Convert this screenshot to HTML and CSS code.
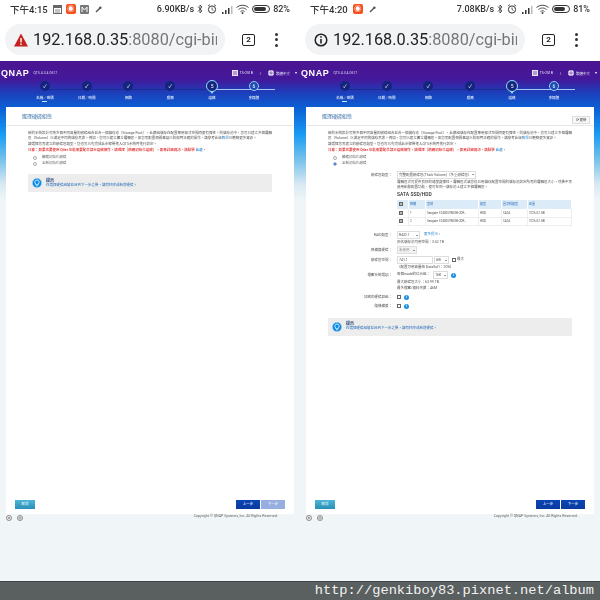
FILE: index.html
```html
<!DOCTYPE html>
<html lang="zh-Hant">
<head>
<meta charset="utf-8">
<title>QTS</title>
<link rel="stylesheet" href="styles.css">
</head>
<body>
<main class="screens">

<section class="phone">
  <div class="status">
    <span class="time">下午4:15</span>
    <svg class="ic-cal" viewBox="0 0 9 9"><rect x=".5" y=".5" width="8" height="8" fill="#fff" stroke="#666"/><rect x="1" y="1" width="7" height="2" fill="#666"/><path d="M2 5h5M2 7h5" stroke="#888"/></svg>
    <span class="app-badge">◉</span>
    <svg class="ic-cal" viewBox="0 0 9 9"><rect width="9" height="9" rx="1" fill="#777"/><path d="M2 7V2l2.500 3L7 2v5" fill="none" stroke="#fff"/></svg>
    <svg class="ic-wrench" viewBox="0 0 7 7"><path d="M1 6l4-4" stroke="#555" stroke-width="1.400"/><circle cx="5.300" cy="1.700" r="1.300" fill="#555"/></svg>
    <span class="status-right">
      <span class="speed">6.90KB/s</span>
      <svg class="ic-bt" viewBox="0 0 6 10"><path d="M1 2.500l4 4.500-2 2V1l2 2-4 4.500" fill="none" stroke="#333" stroke-width=".8"/></svg>
      <svg class="ic-alarm" viewBox="0 0 10 10"><circle cx="5" cy="5.500" r="3.600" fill="none" stroke="#333"/><path d="M5 3.500v2l1.500 1M1 2l2-1.500M9 2L7 .5" fill="none" stroke="#333" stroke-width=".8"/></svg>
      <svg class="ic-sig" viewBox="0 0 12 9"><path d="M1 7h1.500v2H1zM4 5h1.500v4H4zM7 3h1.500v6H7z" fill="#333"/><path d="M10 1h1.500v8H10z" fill="#bbb"/></svg>
      <svg class="ic-wifi" viewBox="0 0 13 10"><path d="M.5 3.500C4 .5 9 .5 12.500 3.500M2.500 5.500C5 3.500 8 3.500 10.500 5.500M4.500 7.500C5.700 6.600 7.300 6.600 8.500 7.500" fill="none" stroke="#444"/><circle cx="6.500" cy="9" r="1" fill="#444"/></svg>
      <span class="battery"><span class="battery-fill b82"></span></span>
      <span class="pct">82%</span>
    </span>
  </div>
  <div class="toolbar">
    <div class="urlbar">
      <svg class="ic-warn" viewBox="0 0 14 13"><path d="M7 0l7 13H0z" fill="#c5221f"/><path d="M6.300 4.500h1.400v4.500H6.300zM6.300 10h1.400v1.400H6.300z" fill="#fff"/></svg>
      <span class="url"><b>192.168.0.35</b>:8080/cgi-bin</span>
    </div>
    <span class="tabs">2</span>
    <span class="more"><i></i><i></i><i></i></span>
  </div>
  <div class="qts">
    <header class="qts-top">
      <span class="logo">QNAP</span><span class="ver">QTS 4.3.4.0617</span>
      <span class="qts-right">
        <svg class="ic-nas" viewBox="0 0 6 6"><rect width="6" height="6" fill="#e8e4f5"/><path d="M1 2h4M1 4h4" stroke="#4b1590" stroke-width=".7"/></svg><span class="chip">TS-251B</span><span class="sep">|</span>
        <svg class="ic-globe" viewBox="0 0 6 6"><circle cx="3" cy="3" r="3" fill="#e8e4f5"/><path d="M3 0v6M0 3h6" stroke="#4b1590" stroke-width=".5"/></svg><span class="chip">繁體中文</span><span class="caret">▾</span>
      </span>
    </header>
    <ol class="steps">
      <li class="step done"><span class="dot">✓</span><span class="lbl">名稱／密碼</span><span class="mark"></span></li>
      <li class="step done"><span class="dot">✓</span><span class="lbl">日期／時間</span></li>
      <li class="step done"><span class="dot">✓</span><span class="lbl">網路</span></li>
      <li class="step done"><span class="dot">✓</span><span class="lbl">服務</span></li>
      <li class="step now"><span class="dot">5</span><span class="lbl">磁碟</span></li>
      <li class="step todo"><span class="dot">6</span><span class="lbl">多媒體</span></li>
    </ol>
    <div class="card">
      <div class="card-head"><h1>選擇硬碟組態</h1></div>
      <div class="card-body">
        <p>新的系統設計可將多個不同容量的磁碟組合並合一個儲存池（Storage Pool），此數組儲存在配置專用部式空間時更有彈性。則儲存池中，您可以建立多個邏輯區（Volume）以滿足不同的儲存需求。例如，您可以建立獨立邏輯區。如您需配置相關事項以防部門正確的操作，請參考此版<a>教學</a>以瞭解更多資訊。</p>
        <p>請選擇您需建立的磁碟區類型。您也可以先完成此步驟後進入QTS系統再進行設定。</p>
        <p class="warn">注意：如果您要使用 Qtier 功能需要配合部分磁碟操作，請選擇［精確初始化磁碟］，如需詳細資訊，請點擊 <a>此處</a>。</p>
        <label class="radio"><i></i><span>精確初始化磁碟</span></label>
        <label class="radio"><i></i><span>全新初始化磁碟</span></label>
        <div class="tip">
          <svg class="tip-ic" viewBox="0 0 10 10"><circle cx="5" cy="5" r="4.700" fill="#0d8ae6" stroke="#bfe3fb" stroke-width=".5"/><path d="M5 2a2.200 2.200 0 0 0-1.200 4v.8h2.400V6A2.200 2.200 0 0 0 5 2z" fill="none" stroke="#fff" stroke-width=".8"/><path d="M4 7.800h2" stroke="#fff" stroke-width=".7"/></svg>
          <div><strong>提示</strong><span>在選擇硬碟組態並且到下一步之後，請勿移除或新增硬碟。</span></div>
        </div>
      </div>
      <div class="card-foot">
        <button class="btn cancel">取消</button>
        <span class="nav"><button class="btn prev">上一步</button><button class="btn next off">下一步</button></span>
      </div>
    </div>
    <footer class="foot">
      <svg class="foot-ic" viewBox="0 0 7 7"><circle cx="3.500" cy="3.500" r="3" fill="#e8e8e8" stroke="#888"/><path d="M2 2l3 3M5 2L2 5" stroke="#777" stroke-width=".7"/></svg>
      <svg class="foot-ic" viewBox="0 0 7 7"><circle cx="3.500" cy="3.500" r="3" fill="#e8e8e8" stroke="#888"/><circle cx="3.500" cy="3.500" r="1.300" fill="none" stroke="#777" stroke-width=".7"/></svg>
      <span class="copy">Copyright © QNAP Systems, Inc. All Rights Reserved.</span>
    </footer>
  </div>
</section>

<section class="phone">
  <div class="status">
    <span class="time">下午4:20</span>
    <span class="app-badge">◉</span>
    <svg class="ic-wrench" viewBox="0 0 7 7"><path d="M1 6l4-4" stroke="#555" stroke-width="1.400"/><circle cx="5.300" cy="1.700" r="1.300" fill="#555"/></svg>
    <span class="status-right">
      <span class="speed">7.08KB/s</span>
      <svg class="ic-bt" viewBox="0 0 6 10"><path d="M1 2.500l4 4.500-2 2V1l2 2-4 4.500" fill="none" stroke="#333" stroke-width=".8"/></svg>
      <svg class="ic-alarm" viewBox="0 0 10 10"><circle cx="5" cy="5.500" r="3.600" fill="none" stroke="#333"/><path d="M5 3.500v2l1.500 1M1 2l2-1.500M9 2L7 .5" fill="none" stroke="#333" stroke-width=".8"/></svg>
      <svg class="ic-sig" viewBox="0 0 12 9"><path d="M1 7h1.500v2H1zM4 5h1.500v4H4zM7 3h1.500v6H7z" fill="#333"/><path d="M10 1h1.500v8H10z" fill="#bbb"/></svg>
      <svg class="ic-wifi" viewBox="0 0 13 10"><path d="M.5 3.500C4 .5 9 .5 12.500 3.500M2.500 5.500C5 3.500 8 3.500 10.500 5.500M4.500 7.500C5.700 6.600 7.300 6.600 8.500 7.500" fill="none" stroke="#444"/><circle cx="6.500" cy="9" r="1" fill="#444"/></svg>
      <span class="battery"><span class="battery-fill b81"></span></span>
      <span class="pct">81%</span>
    </span>
  </div>
  <div class="toolbar">
    <div class="urlbar">
      <svg class="ic-warn" viewBox="0 0 14 14"><circle cx="7" cy="7" r="5.800" fill="none" stroke="#222" stroke-width="1.500"/><path d="M6.200 6h1.600v4.500H6.200zM6.200 3.300h1.600v1.500H6.200z" fill="#222"/></svg>
      <span class="url"><b>192.168.0.35</b>:8080/cgi-bin</span>
    </div>
    <span class="tabs">2</span>
    <span class="more"><i></i><i></i><i></i></span>
  </div>
  <div class="qts">
    <header class="qts-top">
      <span class="logo">QNAP</span><span class="ver">QTS 4.3.4.0617</span>
      <span class="qts-right">
        <svg class="ic-nas" viewBox="0 0 6 6"><rect width="6" height="6" fill="#e8e4f5"/><path d="M1 2h4M1 4h4" stroke="#4b1590" stroke-width=".7"/></svg><span class="chip">TS-251B</span><span class="sep">|</span>
        <svg class="ic-globe" viewBox="0 0 6 6"><circle cx="3" cy="3" r="3" fill="#e8e4f5"/><path d="M3 0v6M0 3h6" stroke="#4b1590" stroke-width=".5"/></svg><span class="chip">繁體中文</span><span class="caret">▾</span>
      </span>
    </header>
    <ol class="steps">
      <li class="step done"><span class="dot">✓</span><span class="lbl">名稱／密碼</span><span class="mark"></span></li>
      <li class="step done"><span class="dot">✓</span><span class="lbl">日期／時間</span></li>
      <li class="step done"><span class="dot">✓</span><span class="lbl">網路</span></li>
      <li class="step done"><span class="dot">✓</span><span class="lbl">服務</span></li>
      <li class="step now"><span class="dot">5</span><span class="lbl">磁碟</span></li>
      <li class="step todo"><span class="dot">6</span><span class="lbl">多媒體</span></li>
    </ol>
    <div class="card">
      <div class="card-head"><h1>選擇硬碟組態</h1><span class="refresh">⟳ 更新</span></div>
      <div class="card-body">
        <p>新的系統設計可將多個不同容量的磁碟組合並合一個儲存池（Storage Pool），此數組儲存在配置專用部式空間時更有彈性。則儲存池中，您可以建立多個邏輯區（Volume）以滿足不同的儲存需求。例如，您可以建立獨立邏輯區。如您需配置相關事項以防部門正確的操作，請參考此版<a>教學</a>以瞭解更多資訊。</p>
        <p>請選擇您需建立的磁碟區類型。您也可以先完成此步驟後進入QTS系統再進行設定。</p>
        <p class="warn">注意：如果您要使用 Qtier 功能需要配合部分磁碟操作，請選擇［精確初始化磁碟］，如需詳細資訊，請點擊 <a>此處</a>。</p>
        <label class="radio"><i></i><span>精確初始化磁碟</span></label>
        <label class="radio on"><i></i><span>全新初始化磁碟</span></label>
        <div class="form">
          <div class="row"><span class="k">磁碟區類型：</span><div class="v"><span class="select wide">完整配置磁碟區(Thick Volume)（多重磁碟區）</span>
            <p class="hint">邏輯區式可提供良好的速度與彈性。邏輯區式讓您從已用儲存配置空間的儲存池設定所需的邏輯區大小，然後不需使用動態配置功能，便可在同一儲存池上建立多個邏輯區。</p></div></div>
          <div class="row"><span class="k"></span><div class="v disks">
            <h2>SATA SSD/HDD</h2>
            <table class="dt">
              <thead><tr><th class="c0"><i class="cb on"></i></th><th class="c1">籤槽</th><th class="c2">型號</th><th class="c3">類型</th><th class="c4">匯流排類型</th><th class="c5">容量</th></tr></thead>
              <tbody>
                <tr><td><i class="cb on"></i></td><td>1</td><td>Seagate ST4000VN008-2DR...</td><td>HDD</td><td>SATA</td><td>3726.02 GB</td></tr>
                <tr><td><i class="cb on"></i></td><td>2</td><td>Seagate ST4000VN008-2DR...</td><td>HDD</td><td>SATA</td><td>3726.02 GB</td></tr>
              </tbody>
            </table>
          </div></div>
          <div class="row"><span class="k">RAID類型：</span><div class="v"><div class="line"><span class="select s1">RAID 1</span><a class="more-link">更多提示 »</a></div><p class="hint">預估儲存池可用空間：3.62 TB</p></div></div>
          <div class="row gap2"><span class="k">熱備援硬碟：</span><div class="v"><div class="line"><span class="select s2 dim">未使用</span></div></div></div>
          <div class="row"><span class="k">磁碟區空間：</span><div class="v"><div class="line"><span class="input">741.1</span><span class="select s3">GB</span><i class="cb"></i><span>最大</span></div><p class="hint">（配置可用容量給 DataVol1：20%）</p></div></div>
          <div class="row gap3"><span class="k">檔案系統選項：</span><div class="v"><div class="line"><span>每個inode的位元組：</span><span class="select s4">16K</span><i class="info">i</i></div><p class="hint">最大磁碟區大小：63.99 TB<br>最多檔案/資料夾數：46M</p></div></div>
          <div class="row gap4"><span class="k">加密的硬碟群組：</span><div class="v"><div class="line short"><i class="cb"></i><i class="info">i</i></div></div></div>
          <div class="row"><span class="k">隨機備援：</span><div class="v"><div class="line short"><i class="cb"></i><i class="info">i</i></div></div></div>
        </div>
        <div class="tip">
          <svg class="tip-ic" viewBox="0 0 10 10"><circle cx="5" cy="5" r="4.700" fill="#0d8ae6" stroke="#bfe3fb" stroke-width=".5"/><path d="M5 2a2.200 2.200 0 0 0-1.200 4v.8h2.400V6A2.200 2.200 0 0 0 5 2z" fill="none" stroke="#fff" stroke-width=".8"/><path d="M4 7.800h2" stroke="#fff" stroke-width=".7"/></svg>
          <div><strong>提示</strong><span>在選擇硬碟組態並且到下一步之後，請勿移除或新增硬碟。</span></div>
        </div>
      </div>
      <div class="card-foot">
        <button class="btn cancel">取消</button>
        <span class="nav"><button class="btn prev">上一步</button><button class="btn next">下一步</button></span>
      </div>
    </div>
    <footer class="foot">
      <svg class="foot-ic" viewBox="0 0 7 7"><circle cx="3.500" cy="3.500" r="3" fill="#e8e8e8" stroke="#888"/><path d="M2 2l3 3M5 2L2 5" stroke="#777" stroke-width=".7"/></svg>
      <svg class="foot-ic" viewBox="0 0 7 7"><circle cx="3.500" cy="3.500" r="3" fill="#e8e8e8" stroke="#888"/><circle cx="3.500" cy="3.500" r="1.300" fill="none" stroke="#777" stroke-width=".7"/></svg>
      <span class="copy">Copyright © QNAP Systems, Inc. All Rights Reserved.</span>
    </footer>
  </div>
</section>

</main>
<div class="watermark">http://genkiboy83.pixnet.net/album</div>
</body>
</html>
```

FILE: styles.css
```css
* { box-sizing: border-box; }
html, body { margin: 0; height: 600px; overflow: hidden; }
body { font-family: "Roboto", "Noto Sans CJK TC", sans-serif; background: #f0f5f8; color: #333; display: flex; flex-direction: column; }
.screens { display: grid; grid-template-columns: 300px 300px; height: 581px; filter: blur(.3px); }
.phone { display: flex; flex-direction: column; min-width: 0; background: #fff; }

.status { height: 18px; padding: 0 10px; display: flex; align-items: center; gap: 4px; font-size: 9.500px; font-weight: 500; color: #333; }
.time { margin-right: 1px; }
.ic-cal { width: 9px; height: 9px; }
.app-badge { width: 10px; height: 10px; border-radius: 2px; background: #f4511e; color: #fff; font-size: 7px; line-height: 10px; text-align: center; }
.ic-wrench { width: 7px; height: 7px; margin-left: 2px; }
.status-right { margin-left: auto; display: flex; align-items: center; gap: 3px; }
.speed { font-size: 9px; }
.pct { font-size: 9px; }
.ic-bt { width: 6px; height: 10px; }
.ic-alarm { width: 10px; height: 10px; margin: 0 1px; }
.ic-sig { width: 12px; height: 9px; }
.ic-wifi { width: 13px; height: 10px; }
.battery { width: 18px; height: 8px; border: 1px solid #333; border-radius: 4px; padding: 1px; display: block; }
.battery-fill { display: block; height: 100%; background: #333; border-radius: 2px; }
.b82 { width: 82%; }
.b81 { width: 81%; }

.toolbar { height: 43px; padding: 6px 0 6px 5px; display: flex; align-items: center; }
.urlbar { width: 220px; height: 31px; background: #f1f3f4; border-radius: 16px; display: flex; align-items: center; padding-left: 9px; gap: 5px; overflow: hidden; }
.ic-warn { width: 14px; height: 14px; flex: none; }
.url { font-size: 16.300px; color: #777; white-space: nowrap; overflow: hidden; width: 184px; }
.url b { font-weight: 400; color: #222; }
.tabs { margin-left: 17px; width: 13px; height: 12px; border: 1.500px solid #222; border-radius: 2px; font-size: 8px; font-weight: 700; line-height: 9px; text-align: center; color: #222; }
.more { margin-left: 20px; display: flex; flex-direction: column; gap: 2.500px; }
.more i { width: 3px; height: 3px; border-radius: 50%; background: #333; display: block; }

.qts { flex: 1; min-height: 0; display: flex; flex-direction: column; background: linear-gradient(180deg, #4b1590 0, #44189a 18px, #1c3fbb 32px, #0a62d6 48px, #1a9cf5 74px, #7cc4ea 100px, #dbeaf3 124px, #f0f5f8 140px); }
.qts-top { height: 16px; margin-top: 4px; padding: 0 3px 0 1px; display: flex; align-items: center; color: #fff; }
.logo { font-size: 9px; font-weight: 700; letter-spacing: .6px; font-family: "Liberation Sans", sans-serif; }
.ver { font-size: 3.500px; margin-left: 4px; color: #dcd6f0; }
.qts-right { margin-left: auto; display: flex; align-items: center; gap: 2px; font-size: 3.500px; }
.ic-nas, .ic-globe { width: 6px; height: 6px; }
.chip { color: #e8e4f5; }
.sep { font-size: 4px; color: #ddd; margin: 0 5px; }
.caret { font-size: 3.500px; margin-left: 3px; }

.steps { list-style: none; margin: 0; padding: 0 26px 0 24px; height: 26px; display: grid; grid-template-columns: repeat(6, 41.800px); }
.step { position: relative; display: flex; flex-direction: column; align-items: center; padding-top: 2px; }
.step::after { content: ""; position: absolute; left: 50%; top: 7.500px; width: 42px; height: 1px; background: #17308f; }
.step.now::after, .step.todo::after { background: #9fc8f0; }
.step.todo::after { width: 21px; }
.dot { position: relative; z-index: 1; width: 10px; height: 10px; margin-top: -2px; border-radius: 50%; background: #14257f; color: #fff; font-size: 5px; line-height: 10px; text-align: center; }
.now .dot { width: 12px; height: 12px; border: 1px solid #8fe0fa; margin-top: -3px; line-height: 10px; }
.now .dot::after { content: ""; position: absolute; left: 3px; top: 10px; border: 2px solid transparent; border-top: 3px solid #8fe0fa; }
.todo .dot { background: #1a4db4; border: 1px solid #9fc8f0; line-height: 8px; }
.lbl { font-size: 3.500px; color: #e6effc; margin-top: 4px; white-space: nowrap; font-weight: 500; }
.now .lbl { margin-top: 3px; }
.mark { width: 5px; height: 1px; margin-top: 1px; background: #cfe4f8; }

.card { margin: 0 6px; height: 407px; background: #fff; display: flex; flex-direction: column; }
.card-head { height: 19px; margin: 0 1px; padding: 5px 0 0 15px; border-bottom: 1px solid #e6e6e6; display: flex; justify-content: space-between; align-items: flex-start; }
.card-head h1 { margin: 0; font-size: 5px; font-weight: 400; color: #3a6ea8; line-height: 8px; }
.refresh { margin: 4px 3px 0 0; width: 18px; height: 8px; border: 1px solid #ddd; font-size: 3.500px; line-height: 6px; text-align: center; color: #444; background: #f7f7f7; }
.card-body { flex: 1; padding: 4.500px 22px 0; font-size: 3.500px; line-height: 5.500px; color: #555; }
.card-body p { margin: 0 0 .7px; }
.card-body a { color: #1d7fd0; }
.warn { color: #e02020; font-weight: 500; }
.radio { display: flex; align-items: center; gap: 5px; height: 6px; margin-left: 5px; color: #666; }
.radio i { width: 4px; height: 4px; border: 1px solid #aaa; border-radius: 50%; background: #fff; }
.radio.on i { background: #3a6fc0; border-color: #b0c4e4; }

.form { margin-top: 4px; }
.row { display: grid; grid-template-columns: 69px 1fr; margin-bottom: .5px; }
.row.gap2 { margin-bottom: 2px; }
.row.gap3 { margin-bottom: 2px; }
.row.gap4 { margin-bottom: 1px; }
.k { text-align: right; padding-right: 5px; color: #555; line-height: 8px; }
.v { min-width: 0; }
.line { display: flex; align-items: center; height: 8px; gap: 1px; }
.line.short { gap: 3px; }
.card-body p.hint { margin: 1px 0 0; }
.select, .input { display: inline-block; border: 1px solid #ddd; height: 8px; line-height: 6px; padding: 0 1px; background: #fff; position: relative; }
.select::after { content: ""; position: absolute; right: 1.500px; top: 2.500px; border: 1px solid transparent; border-top: 1.500px solid #333; }
.select.wide { width: 79px; white-space: nowrap; overflow: hidden; display: block; padding-right: 5px; }
.s1 { width: 23px; }
.s2 { width: 20px; }
.s3 { width: 15px; margin-right: 2px; }
.s4 { width: 15px; margin: 0 2px; }
.dim { color: #999; background: #f3f3f3; }
.input { width: 36px; }
.disks h2 { margin: 0 0 1.500px; font-size: 5px; font-weight: 500; line-height: 7px; color: #333; }
.dt { width: 175px; height: 26px; border-collapse: collapse; font-size: 3px; line-height: 4px; margin-bottom: 4.500px; table-layout: fixed; }
.dt th { background: #dcebf8; font-weight: 400; text-align: left; padding: 0 1.500px; height: 9px; border-right: 1px solid #fff; color: #2a6fb8; }
.dt td { padding: 0 1.500px; height: 8.500px; border-right: 1px solid #eee; border-bottom: 1px solid #eee; white-space: nowrap; overflow: hidden; }
.c0 { width: 11px; }
.c1 { width: 17px; }
.c2 { width: 53px; }
.c3 { width: 23px; }
.c4 { width: 26px; }
.cb { display: inline-block; flex: none; width: 4px; height: 4px; border: .7px solid #666; background: #fff; vertical-align: middle; }
.cb.on { background: #bbb; }
.info { display: inline-block; flex: none; width: 5px; height: 5px; border-radius: 50%; background: #1a90e8; color: #fff; font-size: 3.500px; line-height: 5px; text-align: center; font-style: normal; font-weight: 700; }
.more-link { margin-left: 3px; }

.tip { margin-top: 7.500px; height: 18px; width: 244px; background: #ededed; display: flex; align-items: center; gap: 4px; padding-left: 4px; }
.tip-ic { width: 10px; height: 10px; flex: none; }
.tip strong { display: block; font-size: 4px; line-height: 5px; color: #1f3f70; font-weight: 700; }
.tip div span { display: block; color: #2a6fb8; }

.card-foot { height: 9px; padding: 0 9px; margin-bottom: 5px; display: flex; justify-content: space-between; }
.nav { display: flex; gap: 1px; }
.btn { height: 9px; padding: 0; border: 0; color: #fff; font: inherit; font-size: 3.500px; line-height: 9px; }
.cancel { width: 20px; background: linear-gradient(180deg, #4db6d6, #2a8fb8); }
.prev, .next { width: 24px; background: linear-gradient(180deg, #0a46b4, #0a3aa0); }
.next.off { background: #96aee0; }

.foot { height: 15px; display: flex; align-items: flex-start; padding-left: 6px; gap: 5px; color: #777; }
.foot-ic { width: 6px; height: 6px; margin-top: 1px; }
.copy { margin-left: auto; margin-right: 22px; font-size: 3.600px; line-height: 4px; color: #666; white-space: nowrap; }

.watermark { height: 19px; border-top: 1px solid #444; background: #5a5f60; color: #f2f2f2; font-family: "Liberation Mono", monospace; font-size: 13.700px; line-height: 18px; text-align: right; padding-right: 6px; white-space: nowrap; }
```
